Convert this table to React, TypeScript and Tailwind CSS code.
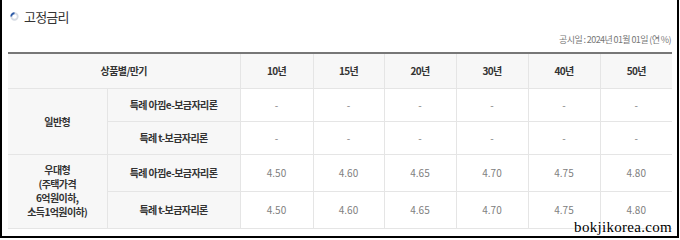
import React from "react";

const font = { fontFamily: '"Noto Sans CJK KR", "Noto Sans", sans-serif' };

const years = ["10년", "15년", "20년", "30년", "40년", "50년"];
const vals = ["4.50", "4.60", "4.65", "4.70", "4.75", "4.80"];

export default function App() {
  const dataCell = "border border-[#e5e5e5] text-center text-[10px] text-[#808080] bg-white";
  const labelCell = "border border-[#e5e5e5] text-center text-[10px] font-bold text-[#333] bg-[#f7f7f7] tracking-[-0.6px]";
  return (
    <div className="relative w-[680px] h-[240px] bg-white" style={font}>
      <div className="w-[679px] h-[238px] border-l-2 border-r-2 border-b-2 border-black bg-white">
        <div className="flex items-center gap-[5px] pl-[8px] pt-[6px] h-[26px]">
          <svg width="9" height="9" viewBox="0 0 10 10">
            <circle cx="5" cy="5" r="3.6" fill="none" stroke="#d6dbe3" strokeWidth="2" />
            <path d="M1.4 5 A3.6 3.6 0 0 1 5 1.4" fill="none" stroke="#2b5aa8" strokeWidth="2" />
          </svg>
          <span className="text-[13px] text-[#333] leading-none tracking-[-0.8px]">고정금리</span>
        </div>
        <div className="flex justify-end pr-[6px] pt-[7px] h-[26px] text-[9px] text-[#777] tracking-[-0.6px] leading-[14px]">
          공시일 : 2024년 01월 01일 (연 %)
        </div>
        <table className="ml-[6px] w-[664px] border-collapse table-fixed">
          <colgroup>
            <col className="w-[99px]" />
            <col className="w-[133px]" />
            <col className="w-[73px]" />
            <col className="w-[71px]" />
            <col className="w-[72px]" />
            <col className="w-[72px]" />
            <col className="w-[72px]" />
            <col className="w-[72px]" />
          </colgroup>
          <thead>
            <tr className="h-[35px] border-t-2 border-t-[#777]">
              <th colSpan={2} className="border-x border-[#e5e5e5] border-t-2 border-t-[#777] bg-[#f7f7f7] text-[10px] font-bold text-[#333] border-l-0 tracking-[-0.6px]">
                상품별/만기
              </th>
              {years.map((y, i) => (
                <th
                  key={y}
                  className={
                    "border-x border-[#e5e5e5] border-t-2 border-t-[#777] bg-[#f7f7f7] text-[10px] font-bold text-[#333] tracking-[-0.6px]" +
                    (i === 5 ? " border-r-0" : "")
                  }
                >
                  {y}
                </th>
              ))}
            </tr>
          </thead>
          <tbody>
            <tr className="h-[33px]">
              <td rowSpan={2} className={labelCell + " border-l-0"}>일반형</td>
              <td className={labelCell}>특례 아낌e-보금자리론</td>
              {years.map((y, i) => (
                <td key={y} className={dataCell + (i === 5 ? " border-r-0" : "")}>-</td>
              ))}
            </tr>
            <tr className="h-[33px]">
              <td className={labelCell}>특례 t-보금자리론</td>
              {years.map((y, i) => (
                <td key={y} className={dataCell + (i === 5 ? " border-r-0" : "")}>-</td>
              ))}
            </tr>
            <tr className="h-[37px]">
              <td rowSpan={2} className={labelCell + " border-l-0 leading-[14px]"}>
                우대형
                <br />
                (주택가격
                <br />
                6억원이하,
                <br />
                소득1억원이하)
              </td>
              <td className={labelCell}>특례 아낌e-보금자리론</td>
              {vals.map((v, i) => (
                <td key={i} className={dataCell + (i === 5 ? " border-r-0" : "")}>{v}</td>
              ))}
            </tr>
            <tr className="h-[37px]">
              <td className={labelCell}>특례 t-보금자리론</td>
              {vals.map((v, i) => (
                <td key={i} className={dataCell + (i === 5 ? " border-r-0" : "")}>{v}</td>
              ))}
            </tr>
          </tbody>
        </table>
      </div>
      <div
        className="absolute right-[8px] bottom-[5px] text-[15px] text-black leading-none tracking-[0.3px]"
        style={{ fontFamily: '"Liberation Serif", "DejaVu Serif", serif' }}
      >
        bokjikorea.com
      </div>
    </div>
  );
}
